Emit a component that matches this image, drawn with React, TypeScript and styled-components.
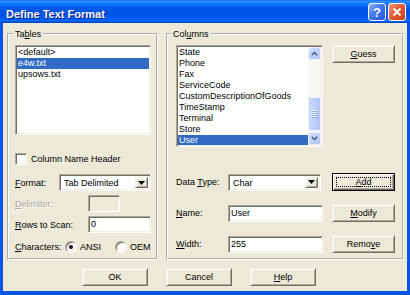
import React from "react";
import styled, { createGlobalStyle, css } from "styled-components";

const GlobalStyle = createGlobalStyle`
  html, body {
    margin: 0;
    padding: 0;
    background: #fff;
  }
  body {
    font-family: "Liberation Sans", Arial, sans-serif;
    font-size: 9px;
    color: #000;
  }
`;

const sunken = css`
  box-sizing: border-box;
  border: 1px solid;
  border-color: #aca899 #fff #fff #aca899;
  box-shadow: inset 1px 1px 0 #716f64, inset -1px -1px 0 #f1efe2;
`;

const raised = css`
  box-sizing: border-box;
  border: 1px solid;
  border-color: #f1efe2 #716f64 #716f64 #f1efe2;
  box-shadow: inset 1px 1px 0 #fff, inset -1px -1px 0 #aca899;
`;

const Window = styled.div`
  width: 410px;
  height: 295px;
  display: flex;
  flex-direction: column;
  background: #0a55e4;
`;

const TitleBar = styled.div`
  height: 23px;
  flex: none;
  box-sizing: border-box;
  display: flex;
  align-items: flex-start;
  padding: 3px 4px 0 6px;
  background: linear-gradient(
    to bottom,
    #0058ee 0px,
    #3593ff 1px,
    #288eff 2px,
    #127dff 3px,
    #036ffc 5px,
    #0262ee 7px,
    #0057e5 9px,
    #0054e3 12px,
    #0055eb 16px,
    #005bf5 19px,
    #026afe 20px,
    #0062ef 21px,
    #0052d6 22px,
    #0040ab 23px
  );
`;

const TitleText = styled.span`
  flex: 1;
  margin-top: 2px;
  font-family: "Liberation Sans", Arial, sans-serif;
  font-weight: bold;
  font-size: 11px;
  line-height: 18px;
  color: #fff;
  text-shadow: 1px 1px 0 #0a1a8c;
`;

const CaptionButton = styled.div<{ $close?: boolean }>`
  width: 18px;
  height: 18px;
  margin-left: 2px;
  box-sizing: border-box;
  border: 1px solid #fff;
  border-radius: 3px;
  display: flex;
  align-items: center;
  justify-content: center;
  color: #fff;
  font-family: "Liberation Sans", Arial, sans-serif;
  font-weight: bold;
  font-size: 13px;
  background: ${(p) =>
    p.$close
      ? "linear-gradient(135deg, #f09a80 0%, #e35a32 45%, #c9401b 100%)"
      : "linear-gradient(135deg, #8fb2fb 0%, #4277ec 45%, #2556dc 100%)"};
`;

const Client = styled.div`
  flex: 1;
  margin: 0 3px 4px;
  padding: 5px 3px 0 4px;
  background: #ece9d8;
  display: flex;
  flex-direction: column;
`;

const GroupRow = styled.div`
  display: flex;
  gap: 8px;
  height: 232px;
`;

const Group = styled.fieldset<{ $width?: number; $padLeft: number; $padRight: number }>`
  margin: 0;
  min-width: 0;
  box-sizing: border-box;
  border: 2px groove #fff;
  padding: 5px ${(p) => p.$padRight}px 0 ${(p) => p.$padLeft}px;
  ${(p) => (p.$width ? `width: ${p.$width}px; flex: none;` : "flex: 1;")}
`;

const Legend = styled.legend<{ $shift: number }>`
  padding: 0 2px;
  margin-left: ${(p) => -p.$shift}px;
  line-height: 12px;
`;

const Key = styled.span`
  text-decoration: underline;
`;

const ListBox = styled.div<{ $height: number }>`
  ${sunken};
  height: ${(p) => p.$height}px;
  padding: 1px;
  background: #fff;
  display: flex;
  overflow: hidden;
`;

const Items = styled.div`
  flex: 1;
  min-width: 0;
  overflow: hidden;
`;

const Item = styled.div<{ $selected?: boolean }>`
  height: 11px;
  line-height: 11px;
  padding-left: 1px;
  white-space: nowrap;
  background: ${(p) => (p.$selected ? "#316ac5" : "transparent")};
  color: ${(p) => (p.$selected ? "#fff" : "#000")};
`;

const ScrollBar = styled.div`
  width: 13px;
  flex: none;
  display: flex;
  flex-direction: column;
  background: #f7f6f1;
`;

const ScrollArrow = styled.div`
  height: 13px;
  flex: none;
  box-sizing: border-box;
  border: 1px solid #eef2fd;
  border-radius: 2px;
  background: linear-gradient(135deg, #d5e1fd 0%, #c0d2fa 50%, #b1c6f6 100%);
  display: flex;
  align-items: center;
  justify-content: center;
`;

const Track = styled.div`
  flex: 1;
  display: flex;
  flex-direction: column;
`;

const Thumb = styled.div`
  margin-top: 37px;
  height: 34px;
  box-sizing: border-box;
  border: 1px solid #eef2fd;
  border-radius: 2px;
  background: linear-gradient(90deg, #c9d8fc 0%, #bccffa 60%, #adc3f5 100%);
  display: flex;
  align-items: center;
  justify-content: center;
`;

const FieldRow = styled.div<{ $top: number }>`
  display: flex;
  align-items: center;
  margin-top: ${(p) => p.$top}px;
`;

const FieldLabel = styled.span<{ $width: number; $disabled?: boolean }>`
  width: ${(p) => p.$width}px;
  flex: none;
  white-space: nowrap;
  ${(p) =>
    p.$disabled &&
    css`
      color: #aca899;
      text-shadow: 1px 1px 0 #fff;
    `}
`;

const CheckBox = styled.span`
  ${sunken};
  width: 12px;
  height: 12px;
  flex: none;
  background: #fff;
  margin-right: 4px;
`;

const Combo = styled.div<{ $width: number }>`
  ${sunken};
  width: ${(p) => p.$width}px;
  height: 17px;
  padding: 2px;
  background: #fff;
  display: flex;
`;

const ComboText = styled.span`
  flex: 1;
  padding-left: 2px;
  line-height: 13px;
`;

const DropButton = styled.span`
  ${raised};
  width: 13px;
  background: #ece9d8;
  display: flex;
  align-items: center;
  justify-content: center;
`;

const TextBox = styled.div<{ $width: number; $disabled?: boolean }>`
  ${sunken};
  width: ${(p) => p.$width}px;
  height: 17px;
  padding: 0 2px;
  line-height: 15px;
  background: ${(p) => (p.$disabled ? "#ece9d8" : "#fff")};
`;

const RadioOption = styled.span<{ $width?: number }>`
  display: flex;
  align-items: center;
  gap: 3px;
  ${(p) => p.$width && `width: ${p.$width}px;`}
`;

const Radio = styled.span<{ $checked?: boolean }>`
  ${sunken};
  width: 12px;
  height: 12px;
  border-radius: 50%;
  background: #fff;
  display: flex;
  align-items: center;
  justify-content: center;

  &::after {
    content: "";
    width: 4px;
    height: 4px;
    border-radius: 50%;
    background: #000;
    display: ${(p) => (p.$checked ? "block" : "none")};
  }
`;

const ColumnsGrid = styled.div`
  display: grid;
  grid-template-columns: 147px 63px;
  grid-template-rows: 115px 18px 18px 18px;
  column-gap: 9px;
  row-gap: 13px;
`;

const Cell = styled.div`
  display: flex;
  align-items: center;
`;

const Button = styled.button<{ $width?: number; $default?: boolean }>`
  ${raised};
  width: ${(p) => p.$width ?? 63}px;
  height: 18px;
  padding: 0;
  align-self: start;
  background: #ece9d8;
  color: #000;
  font-family: "Liberation Sans", Arial, sans-serif;
  font-size: 9px;
  line-height: 14px;
  ${(p) =>
    p.$default &&
    css`
      border-color: #000;
      box-shadow: inset 1px 1px 0 #fff, inset -1px -1px 0 #716f64, inset -2px -2px 0 #aca899;
      outline: 1px dotted #000;
      outline-offset: -5px;
    `}
`;

const ButtonRow = styled.div`
  display: flex;
  gap: 18px;
  margin-top: 8px;
  padding-left: 75px;
`;

const DownTriangle = () => (
  <svg width="7" height="4" viewBox="0 0 7 4">
    <polygon points="0,0 7,0 3.5,4" fill="#000" />
  </svg>
);

const Chevron = ({ up }: { up?: boolean }) => (
  <svg width="7" height="5" viewBox="0 0 7 5">
    <polyline
      points={up ? "0.8,4.2 3.5,1.5 6.2,4.2" : "0.8,0.8 3.5,3.5 6.2,0.8"}
      fill="none"
      stroke="#4d6185"
      strokeWidth="1.6"
    />
  </svg>
);

const Grip = () => (
  <svg width="7" height="8" viewBox="0 0 7 8">
    {[0, 2, 4, 6].map((y) => (
      <g key={y}>
        <rect x="0" y={y} width="6" height="1" fill="#eef4fe" />
        <rect x="1" y={y + 1} width="6" height="1" fill="#8cacf0" />
      </g>
    ))}
  </svg>
);

const tables = ["<default>", "e4w.txt", "upsows.txt"];
const columns = [
  "State",
  "Phone",
  "Fax",
  "ServiceCode",
  "CustomDescriptionOfGoods",
  "TimeStamp",
  "Terminal",
  "Store",
  "User",
];

export default function App() {
  return (
    <>
      <GlobalStyle />
      <Window>
        <TitleBar>
          <TitleText>Define Text Format</TitleText>
          <CaptionButton>?</CaptionButton>
          <CaptionButton $close>
            <svg width="10" height="10" viewBox="0 0 10 10">
              <path d="M1.5 1.5 L8.5 8.5 M8.5 1.5 L1.5 8.5" stroke="#fff" strokeWidth="2" />
            </svg>
          </CaptionButton>
        </TitleBar>
        <Client>
          <GroupRow>
            <Group $width={151} $padLeft={6} $padRight={5}>
              <Legend $shift={2}>
                Ta<Key>b</Key>les
              </Legend>
              <ListBox $height={90}>
                <Items>
                  {tables.map((t) => (
                    <Item key={t} $selected={t === "e4w.txt"}>
                      {t}
                    </Item>
                  ))}
                </Items>
              </ListBox>
              <FieldRow $top={18}>
                <CheckBox />
                Column Name Header
              </FieldRow>
              <FieldRow $top={9}>
                <FieldLabel $width={44}>
                  <Key>F</Key>ormat:
                </FieldLabel>
                <Combo $width={92}>
                  <ComboText>Tab Delimited</ComboText>
                  <DropButton>
                    <DownTriangle />
                  </DropButton>
                </Combo>
              </FieldRow>
              <FieldRow $top={4}>
                <FieldLabel $width={73} $disabled>
                  <Key>D</Key>elimiter:
                </FieldLabel>
                <TextBox $width={32} $disabled />
              </FieldRow>
              <FieldRow $top={4}>
                <FieldLabel $width={73}>
                  <Key>R</Key>ows to Scan:
                </FieldLabel>
                <TextBox $width={63}>0</TextBox>
              </FieldRow>
              <FieldRow $top={8}>
                <FieldLabel $width={50}>
                  <Key>C</Key>haracters:
                </FieldLabel>
                <RadioOption $width={50}>
                  <Radio $checked />
                  ANSI
                </RadioOption>
                <RadioOption>
                  <Radio />
                  OEM
                </RadioOption>
              </FieldRow>
            </Group>

            <Group $padLeft={8} $padRight={7}>
              <Legend $shift={5}>
                Col<Key>u</Key>mns
              </Legend>
              <ColumnsGrid>
                <ListBox $height={102}>
                  <Items>
                    {columns.map((c) => (
                      <Item key={c} $selected={c === "User"}>
                        {c}
                      </Item>
                    ))}
                  </Items>
                  <ScrollBar>
                    <ScrollArrow>
                      <Chevron up />
                    </ScrollArrow>
                    <Track>
                      <Thumb>
                        <Grip />
                      </Thumb>
                    </Track>
                    <ScrollArrow>
                      <Chevron />
                    </ScrollArrow>
                  </ScrollBar>
                </ListBox>
                <Button>
                  <Key>G</Key>uess
                </Button>

                <Cell>
                  <FieldLabel $width={52}>
                    Data <Key>T</Key>ype:
                  </FieldLabel>
                  <Combo $width={93}>
                    <ComboText>Char</ComboText>
                    <DropButton>
                      <DownTriangle />
                    </DropButton>
                  </Combo>
                </Cell>
                <Button $default>
                  <Key>A</Key>dd
                </Button>

                <Cell>
                  <FieldLabel $width={52}>
                    <Key>N</Key>ame:
                  </FieldLabel>
                  <TextBox $width={95}>User</TextBox>
                </Cell>
                <Button>
                  <Key>M</Key>odify
                </Button>

                <Cell>
                  <FieldLabel $width={52}>
                    <Key>W</Key>idth:
                  </FieldLabel>
                  <TextBox $width={95}>255</TextBox>
                </Cell>
                <Button>
                  Remo<Key>v</Key>e
                </Button>
              </ColumnsGrid>
            </Group>
          </GroupRow>
          <ButtonRow>
            <Button $width={66}>OK</Button>
            <Button $width={66}>Cancel</Button>
            <Button $width={66}>
              <Key>H</Key>elp
            </Button>
          </ButtonRow>
        </Client>
      </Window>
    </>
  );
}
